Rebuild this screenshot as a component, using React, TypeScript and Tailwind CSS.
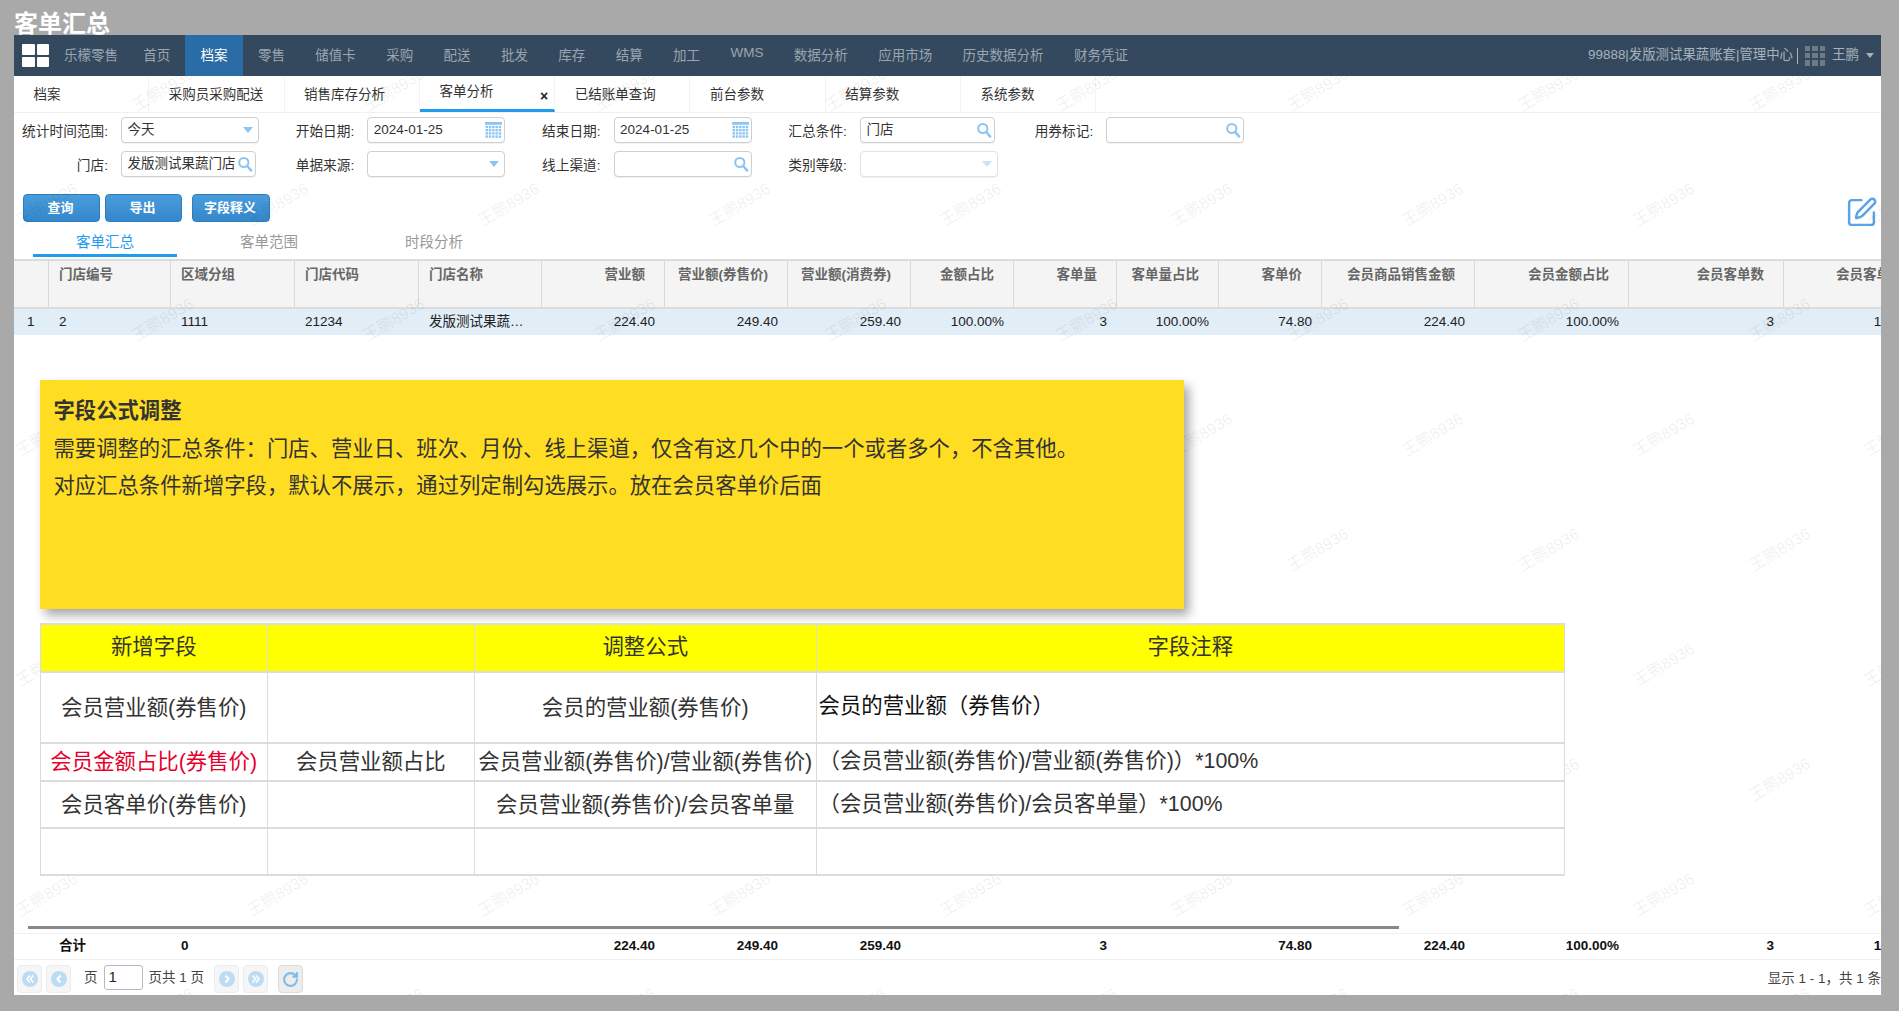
import React from "react";
import { RotateCw, SquarePen } from "lucide-react";

const FONT = "font-['Liberation_Sans','Noto_Sans_CJK_SC',sans-serif]";

const navItems = ["首页", "档案", "零售", "储值卡", "采购", "配送", "批发", "库存", "结算", "加工", "WMS", "数据分析", "应用市场", "历史数据分析", "财务凭证"];
const subTabs = ["档案", "采购员采购配送", "销售库存分析", "客单分析", "已结账单查询", "前台参数", "结算参数", "系统参数"];

type Col = { h: string; left?: boolean };
const cols: Col[] = [
  { h: "" },
  { h: "门店编号", left: true },
  { h: "区域分组", left: true },
  { h: "门店代码", left: true },
  { h: "门店名称", left: true },
  { h: "营业额" },
  { h: "营业额(券售价)" },
  { h: "营业额(消费券)" },
  { h: "金额占比" },
  { h: "客单量" },
  { h: "客单量占比" },
  { h: "客单价" },
  { h: "会员商品销售金额" },
  { h: "会员金额占比" },
  { h: "会员客单数" },
  { h: "会员客单占比" },
];
const GRID = "grid grid-cols-[35px_122px_124px_124px_123px_123px_123px_123px_103px_103px_102px_103px_153px_154px_155px_153px]";
const rowVals = ["1", "2", "1111", "21234", "发版测试果蔬…", "224.40", "249.40", "259.40", "100.00%", "3", "100.00%", "74.80", "224.40", "100.00%", "3", "100.00%"];
const sumVals = ["", "合计", "0", "", "", "224.40", "249.40", "259.40", "", "3", "", "74.80", "224.40", "100.00%", "3", "100.00%"];

function SearchIcon() {
  return (
    <svg viewBox="0 0 16 16" className="w-[16px] h-[16px]" fill="none" stroke="#8ec5f0" strokeWidth="2">
      <circle cx="6.8" cy="6.5" r="4.6" />
      <path d="M10.2 10l3.8 4.4" strokeWidth="2.6" strokeLinecap="round" />
    </svg>
  );
}

function CalendarIcon() {
  const cells = [];
  for (let y = 0; y < 4; y++) for (let x = 0; x < 5; x++) cells.push(<rect key={`${x}-${y}`} x={0.5 + x * 3.1} y={3.6 + y * 3} width="2.3" height="2.2" fill="#8ec5f0" />);
  return (
    <svg viewBox="0 0 16 16" className="w-[17px] h-[17px]">
      <rect x="0" y="0" width="16" height="2.6" fill="#8ec5f0" />
      {cells}
    </svg>
  );
}

function Caret({ light }: { light?: boolean }) {
  return <span className={`w-0 h-0 border-x-[5px] border-x-transparent border-t-[6px] ${light ? "border-t-[#cbe3f6]" : "border-t-[#8ec5f0]"}`} />;
}

type FieldProps = { label: string; value?: string; icon?: "search" | "cal" | "caret" | "caretLight"; w?: string; muted?: boolean };
function Field({ label, value, icon, w = "w-[138px]", muted }: FieldProps) {
  return (
    <div className="flex items-center">
      <span className="w-[94px] pt-[3px] text-right text-[13.7px] leading-none text-[#333] whitespace-nowrap">{label}</span>
      <div className={`ml-[13px] h-[26px] ${w} flex items-center justify-between rounded-[4px] border bg-white pl-[5.5px] pr-[2px] shadow-[0_1px_1px_rgba(0,0,0,0.06)] ${muted ? "border-[#e2e2e2]" : "border-[#cfcfcf]"}`}>
        <span className="text-[13.5px] text-[#333] whitespace-nowrap">{value}</span>
        <span className={`flex items-center justify-center ${icon === "caret" || icon === "caretLight" ? "pr-[3px]" : ""}`}>
          {icon === "search" && <SearchIcon />}
          {icon === "cal" && <CalendarIcon />}
          {icon === "caret" && <Caret />}
          {icon === "caretLight" && <Caret light />}
        </span>
      </div>
    </div>
  );
}

function Btn({ children, w }: { children: React.ReactNode; w: string }) {
  return (
    <button className={`${w} h-[28px] rounded-[4px] border border-[#2f7dbd] bg-gradient-to-b from-[#4a9ddb] to-[#3387cb] pr-[2px] text-[13px] font-bold text-white`}>
      {children}
    </button>
  );
}

function PagerBtn({ dir, dbl, w = "w-[25px]" }: { dir: "l" | "r"; dbl?: boolean; w?: string }) {
  const d = dir === "l" ? ["M8 4.5L5 8l3 3.5", "M11.5 4.5L8.5 8l3 3.5"] : ["M8 4.5L11 8l-3 3.5", "M4.5 4.5L7.5 8l-3 3.5"];
  const single = dir === "l" ? "M9.5 4.5L6.5 8l3 3.5" : "M6.5 4.5L9.5 8l-3 3.5";
  return (
    <span className={`${w} h-[28px] flex items-center justify-center rounded-[4px] border border-[#ececec] bg-[#f6f6f6]`}>
      <svg viewBox="0 0 16 16" className="w-[16px] h-[16px]">
        <circle cx="8" cy="8" r="8" fill="#bcdcf4" />
        {dbl ? (
          <g fill="none" stroke="#fff" strokeWidth="1.6">
            <path d={d[0]} />
            <path d={d[1]} />
          </g>
        ) : (
          <path d={single} fill="none" stroke="#fff" strokeWidth="2.2" />
        )}
      </svg>
    </span>
  );
}

function Watermarks() {
  const marks: { x: number; y: number }[] = [];
  for (let r = 0; r < 9; r++) {
    for (let k = 0; k < 10; k++) {
      const x = (r % 2 === 0 ? 163 : 47) + 231 * k - 14;
      const y = 90 + 115 * r - 35;
      marks.push({ x, y });
    }
  }
  return (
    <div className="absolute inset-0 z-10 overflow-hidden pointer-events-none">
      {marks.map((m, i) => (
        <span
          key={i}
          className="absolute -translate-x-1/2 -translate-y-1/2 -rotate-[31deg] whitespace-nowrap text-[16px] leading-none text-black/[0.07]"
          style={{ left: m.x, top: m.y }}
        >
          王鹏8936
        </span>
      ))}
    </div>
  );
}

const CELL = "border-x border-y-2 border-[#dcdcdc] text-center text-[21.4px] text-[#333] font-normal p-0 whitespace-nowrap";

export default function App() {
  return (
    <div className={`${FONT} w-[1899px] h-[1011px] overflow-hidden bg-[#a9a9a9] pl-[14px]`}>
      <div className="h-[35px] flex items-end">
        <h1 className="text-[24px] leading-[28px] font-bold text-white whitespace-nowrap -mb-[3px]">客单汇总</h1>
      </div>
      <div className="relative w-[1867px] h-[960px] bg-white overflow-hidden flex flex-col">
        <Watermarks />
        {/* top nav */}
        <div className="relative z-20 h-[41px] shrink-0 bg-[#34495e] flex items-center">
          <div className="ml-[8px] w-[27px] h-[23px] grid grid-cols-2 gap-[2px]">
            <span className="bg-white rounded-[1px]" />
            <span className="bg-white rounded-[1px]" />
            <span className="bg-white rounded-[1px]" />
            <span className="bg-white rounded-[1px]" />
          </div>
          <span className="ml-[15px] mr-[10px] pt-[1px] text-[13.5px] text-[#9aa5b0] whitespace-nowrap">乐檬零售</span>
          {navItems.map((n) => (
            <span
              key={n}
              className={`h-full flex items-center px-[15.2px] text-[13.5px] whitespace-nowrap ${n === "档案" ? "bg-[#2a6ca5] text-white" : "text-[#9aa5b0]"} ${n === "WMS" ? "pb-[4px]" : "pt-[1px]"}`}
            >
              {n}
            </span>
          ))}
          <span className="ml-auto text-[13.4px] text-[#a8b2bc] whitespace-nowrap">99888|发版测试果蔬账套|管理中心</span>
          <span className="ml-[4px] w-px h-[16px] bg-[#a8b2bc]" />
          <div className="ml-[7px] grid grid-cols-3 gap-[2px] w-[20px] h-[20px]">
            {Array.from({ length: 9 }).map((_, i) => (
              <span key={i} className="bg-[#6d7a87]" />
            ))}
          </div>
          <span className="ml-[7px] text-[13.5px] text-[#a8b2bc]">王鹏</span>
          <span className="ml-[7px] mr-[7px] w-0 h-0 border-x-[4px] border-x-transparent border-t-[5px] border-t-[#a8b2bc]" />
        </div>

        {/* module tabs */}
        <div className="h-[37px] shrink-0 border-b border-[#f0f0f0] flex">
          {subTabs.map((t, i) => (
            <div
              key={t}
              className={`relative w-[135.3px] shrink-0 h-full flex items-center pl-[19.5px] text-[13.5px] text-[#333] whitespace-nowrap border-r border-[#f3f3f3] ${i === 3 ? "border-b-[3px] border-b-[#1f9bf0]" : "pt-[2px]"}`}
            >
              {t}
              {i === 3 && <span className="absolute right-[6px] top-[13px] text-[14px] leading-none font-bold text-[#222]">×</span>}
            </div>
          ))}
        </div>

        {/* filters */}
        <div className="mt-[4px] grid grid-cols-[repeat(5,246.3px)] gap-y-[8px]">
          <Field label="统计时间范围:" value="今天" icon="caret" />
          <Field label="开始日期:" value="2024-01-25" icon="cal" />
          <Field label="结束日期:" value="2024-01-25" icon="cal" />
          <Field label="汇总条件:" value="门店" icon="search" w="w-[135px]" />
          <Field label="用券标记:" icon="search" />
          <Field label="门店:" value="发版测试果蔬门店" icon="search" w="w-[135px]" />
          <Field label="单据来源:" icon="caret" />
          <Field label="线上渠道:" icon="search" />
          <Field label="类别等级:" icon="caretLight" muted />
        </div>

        {/* actions */}
        <div className="mt-[17px] h-[28px] flex items-start pl-[9px] pr-[3px]">
          <Btn w="w-[77px]">查询</Btn>
          <span className="w-[5px]" />
          <Btn w="w-[77px]">导出</Btn>
          <span className="w-[10px]" />
          <Btn w="w-[78px]">字段释义</Btn>
          <SquarePen className="ml-auto mt-[2px] w-[33px] h-[33px] text-[#5aa5e6]" strokeWidth={1.8} />
        </div>

        {/* inner tabs */}
        <div className="h-[37px] shrink-0 flex items-start pl-[19px] text-[14.5px] text-[#999]">
          <span className="w-[144px] h-[35px] pt-[10px] text-center border-b-[3px] border-[#1f9bf0] text-[#1f9bf0] leading-[20px]">客单汇总</span>
          <span className="ml-[63px] pt-[10px] leading-[20px]">客单范围</span>
          <span className="ml-[107px] pt-[10px] leading-[20px]">时段分析</span>
        </div>

        {/* grid header */}
        <div className={`${GRID} h-[50px] shrink-0 bg-[#f4f4f4] border-y-2 border-[#dcdcdc]`}>
          {cols.map((c, i) => (
            <div
              key={i}
              className={`border-r border-[#d9d9d9] pt-[5px] text-[13.5px] leading-[18px] font-bold text-[#666] whitespace-nowrap ${c.left ? "pl-[10px] text-left" : "pr-[19px] text-right"}`}
            >
              {c.h}
            </div>
          ))}
        </div>
        {/* grid row */}
        <div className={`${GRID} h-[26px] shrink-0 bg-[#e1edf7] items-center pt-[1px] text-[13.5px] text-[#222]`}>
          {rowVals.map((v, i) => (
            <div key={i} className={`whitespace-nowrap ${i === 0 ? "pl-[13px]" : i < 5 ? "pl-[10px]" : "pr-[10px] text-right"}`}>
              {v}
            </div>
          ))}
        </div>

        {/* note */}
        <div className="relative z-20 mt-[45px] ml-[26px] w-[1144px] h-[229px] shrink-0 bg-[#ffdd22] pl-[13.5px] pt-[13px] shadow-[5px_6px_10px_rgba(0,0,0,0.35)] text-[#333] text-[21.35px] leading-[37px]">
          <div className="font-bold">字段公式调整</div>
          <div className="pt-[1px]">需要调整的汇总条件：门店、营业日、班次、月份、线上渠道，仅含有这几个中的一个或者多个，不含其他。</div>
          <div>对应汇总条件新增字段，默认不展示，通过列定制勾选展示。放在会员客单价后面</div>
        </div>

        {/* added fields table */}
        <table className="relative z-20 mt-[14px] ml-[26px] w-[1525px] shrink-0 table-fixed border-collapse bg-white">
          <colgroup>
            <col className="w-[226.5px]" />
            <col className="w-[207.5px]" />
            <col className="w-[341.5px]" />
            <col />
          </colgroup>
          <tbody>
            <tr className="h-[48px] bg-[#ffff00]">
              <th className={`${CELL} !pb-[2px]`}>新增字段</th>
              <th className={CELL}></th>
              <th className={`${CELL} !pb-[2px]`}>调整公式</th>
              <th className={`${CELL} !pb-[2px]`}>字段注释</th>
            </tr>
            <tr className="h-[71px]">
              <td className={`${CELL} !pt-[1px]`}>会员营业额(券售价)</td>
              <td className={CELL}></td>
              <td className={`${CELL} !pt-[1px]`}>会员的营业额(券售价)</td>
              <td className={`${CELL} !text-left pl-[2px] !pb-[3px] !text-[#111]`}>会员的营业额（券售价）</td>
            </tr>
            <tr className="h-[38px]">
              <td className={`${CELL} !pt-[1px] !text-[#e6002d]`}>会员金额占比(券售价)</td>
              <td className={`${CELL} !pt-[1px]`}>会员营业额占比</td>
              <td className={`${CELL} !pt-[1px]`}>会员营业额(券售价)/营业额(券售价)</td>
              <td className={`${CELL} !text-left pl-[2px] !pb-[2px]`}>（会员营业额(券售价)/营业额(券售价)）*100%</td>
            </tr>
            <tr className="h-[47px]">
              <td className={`${CELL} !pt-[2px]`}>会员客单价(券售价)</td>
              <td className={CELL}></td>
              <td className={`${CELL} !pt-[2px]`}>会员营业额(券售价)/会员客单量</td>
              <td className={`${CELL} !text-left pl-[2px] !pb-[1px]`}>（会员营业额(券售价)/会员客单量）*100%</td>
            </tr>
            <tr className="h-[47px]">
              <td className={CELL}></td>
              <td className={CELL}></td>
              <td className={CELL}></td>
              <td className={CELL}></td>
            </tr>
          </tbody>
        </table>

        {/* scrollbar */}
        <div className="mt-[50px] ml-[14px] w-[1371px] h-[3px] shrink-0 bg-[#888]" />

        {/* footer totals */}
        <div className={`${GRID} mt-[4px] h-[27px] shrink-0 items-center border-y border-[#f0f0f0] text-[13.5px] font-bold text-[#111]`}>
          {sumVals.map((v, i) => (
            <div key={i} className={`whitespace-nowrap ${i < 5 ? "pl-[10px]" : "pr-[10px] text-right"}`}>
              {v}
            </div>
          ))}
        </div>

        {/* pager */}
        <div className="flex-1 flex items-start pt-[5px] pl-[3px] text-[13.5px] text-[#444]">
          <PagerBtn dir="l" dbl />
          <span className="w-[4px]" />
          <PagerBtn dir="l" />
          <span className="ml-[13px] mt-[4px] leading-[18px]">页</span>
          <span className="ml-[6px] w-[39px] h-[25px] rounded-[3px] border border-[#b8b8c4] bg-white pl-[4px] text-[15px] leading-[22px] text-[#222]">1</span>
          <span className="ml-[6px] mt-[4px] leading-[18px]">页共 1 页</span>
          <span className="w-[10px]" />
          <PagerBtn dir="r" />
          <span className="w-[4px]" />
          <PagerBtn dir="r" dbl />
          <span className="w-[10px]" />
          <span className="w-[25px] h-[28px] flex items-center justify-center rounded-[4px] border border-[#dcdcdc] bg-[#ededed]">
            <RotateCw className="w-[17px] h-[17px] text-[#7dbcec]" strokeWidth={3} />
          </span>
          <span className="ml-auto mt-[5px] text-[13.5px] leading-[18px] whitespace-nowrap">显示 1 - 1，共 1 条</span>
        </div>
      </div>
    </div>
  );
}
